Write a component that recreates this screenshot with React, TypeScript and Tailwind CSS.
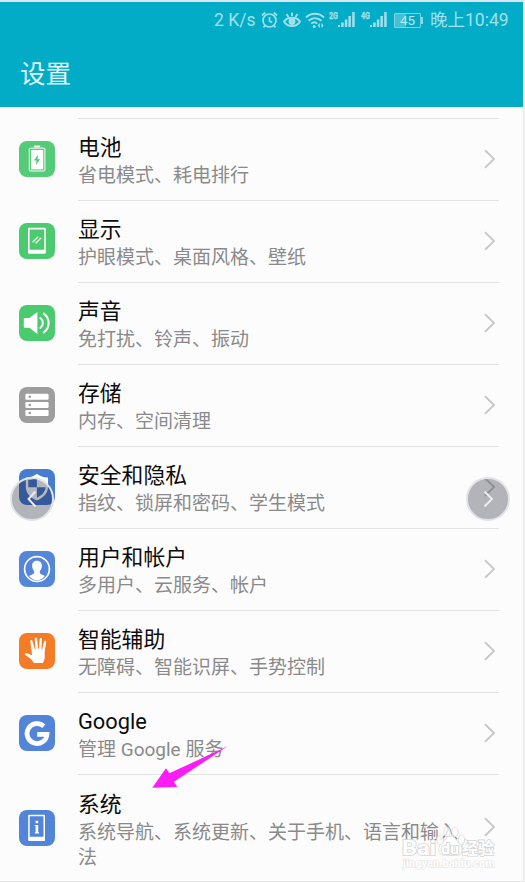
import type { ReactNode } from "react";

type Row = { title: string; sub: string; color: string; icon: ReactNode };

const rows: Row[] = [
  {
    title: "电池",
    sub: "省电模式、耗电排行",
    color: "bg-[#54cb77]",
    icon: (
      <>
        <rect x="15" y="4.6" width="6.2" height="1.8" fill="#fff" />
        <rect x="10.3" y="7.2" width="15.6" height="22.8" rx="1" fill="none" stroke="#fff" strokeWidth="1" />
        <rect x="12" y="9" width="12.2" height="19.4" fill="#fff" />
        <path d="M19.2 13.8 14.8 19.6h2.7l-.7 4.6 4.4-5.9h-2.7z" fill="#54cb77" />
      </>
    ),
  },
  {
    title: "显示",
    sub: "护眼模式、桌面风格、壁纸",
    color: "bg-[#4cca70]",
    icon: (
      <>
        <path fillRule="evenodd" d="M10 4.8h15.8q1 0 1 1v24q0 1-1 1H10q-1 0-1-1v-24q0-1 1-1zM10.6 6.4v20.4h14.6V6.4z" fill="#fff" />
        <path d="M13.7 19.2l5.5-5.5M16.6 20.4l5.5-5.5" stroke="#fff" strokeWidth="1.3" />
      </>
    ),
  },
  {
    title: "声音",
    sub: "免打扰、铃声、振动",
    color: "bg-[#4cca70]",
    icon: (
      <>
        <path d="M5.6 13h4.8L18.4 7v22l-8-6.2H5.6q-.8 0-.8-.8v-8.200q0-.8.8-.8z" fill="#fff" />
        <path d="M21.300 13a6.200 6.200 0 0 1 0 10M24.800 8.600a11.600 11.600 0 0 1 0 18.800" fill="none" stroke="#fff" strokeWidth="2" strokeLinecap="round" />
      </>
    ),
  },
  {
    title: "存储",
    sub: "内存、空间清理",
    color: "bg-[#9d9d9d]",
    icon: (
      <>
        {[6.7, 15, 23].map((y) => (
          <g key={y}>
            <rect x="6.4" y={y} width="23.200" height="6" rx="1.200" fill="#fff" />
            <circle cx="10.800" cy={y + 3} r="1.300" fill="#9d9d9d" />
          </g>
        ))}
      </>
    ),
  },
  {
    title: "安全和隐私",
    sub: "指纹、锁屏和密码、学生模式",
    color: "bg-[#487cd1]",
    icon: (
      <>
        <path d="M17.900 4.700C20.500 7 24.500 8.300 29 8.500v9.500c0 6.500-5 11-11.100 13.500C11.700 29 6.800 24.500 6.800 18V8.500c4.500-.2 8.500-1.500 11.100-3.800z" fill="#fff" />
        <path d="M17.900 8.500c-2.500 1.500-5 2.300-8.600 2.600v7.100h8.600zM17.900 18.200h8.700c-.3 4.800-4 8.300-8.700 10.500z" fill="#487cd1" />
      </>
    ),
  },
  {
    title: "用户和帐户",
    sub: "多用户、云服务、帐户",
    color: "bg-[#5486da]",
    icon: (
      <>
        <circle cx="18" cy="18" r="12.400" fill="none" stroke="#fff" strokeWidth="1.700" />
        <path d="M18 9.800c3.500 0 5 2.300 4.900 5.300-.1 2.200-1 3.700-2 4.800v2.300c1.200 1.400 3.300 1.600 5 2.700-2 2.500-4.700 4.300-7.900 4.300s-5.900-1.800-7.900-4.300c1.700-1.100 3.800-1.300 5-2.700v-2.300c-1-1.100-1.900-2.600-2-4.800-.1-3 1.400-5.300 4.900-5.300z" fill="#fff" />
      </>
    ),
  },
  {
    title: "智能辅助",
    sub: "无障碍、智能识屏、手势控制",
    color: "bg-[#f57c27]",
    icon: (
      <path
        d="M11.300 8.700c-.3-1.700 1.700-2.200 2.200-.7l2.300 8.200.7-.1L15.700 6c-.1-1.700 2.200-1.800 2.400-.2l1.100 10h.7l.8-9.600c.2-1.600 2.300-1.400 2.200.2l-.5 10 .7.2 2-8c.4-1.500 2.400-1 2.100.6l-1.500 9.300c-.2 3.200.5 5.700-.4 8.200-.7 2-1 2.700-1.600 3.300H14.800c-1-1.600-1.900-3.400-4.200-5-1.800-1.300-3.400-2.100-4.600-3.400-.7-.9.200-1.700 1.300-1.400 2.200.3 3.900 1.300 5.800 2.100z"
        fill="#fff"
      />
    ),
  },
  {
    title: "Google",
    sub: "管理 Google 服务",
    color: "bg-[#5284d9]",
    icon: (
      <path d="M24.800 11.200A10 10 0 1 0 28 19.300H18.200" fill="none" stroke="#fff" strokeWidth="4.700" />
    ),
  },
  {
    title: "系统",
    sub: "系统导航、系统更新、关于手机、语言和输入法",
    color: "bg-[#5284d9]",
    icon: (
      <>
        <path fillRule="evenodd" d="M10 4.800h15.200q.8 0 .8.800v24.600q0 .8-.8.800H10q-.8 0-.8-.800V5.600q0-.8.800-.8zM10.700 6.300v20.500h13.800V6.300z" fill="#fff" />
        <path d="M16.600 10.800h2.600v2.500h-2.600zM15.800 15h3.400v7.300h.8v1.100h-4.200v-1.100h.8v-6.200h-.8z" fill="#fff" />
      </>
    ),
  },
];

function Signal({ label }: { label: string }) {
  return (
    <svg className="h-5 w-7" viewBox="0 0 28 20" fill="currentColor">
      <text x="0" y="8.500" fontSize="9" fontWeight="700" stroke="currentColor" strokeWidth=".3" textLength="9" lengthAdjust="spacingAndGlyphs">
        {label}
      </text>
      <path d="M9 15h2v2H9zM12.200 12.500h2.500V17h-2.500zM15.800 9.500h2.500V17h-2.500zM19.400 6h2.500v11h-2.500zM23.200 2h2.500v15h-2.500z" />
    </svg>
  );
}

function StatusBar() {
  return (
    <div className="relative h-[37px] text-[#a0e0ea]">
      <div className="flex h-full items-center pl-[214px] text-[17.500px]">
        <span className="w-[47px] whitespace-nowrap">2 K/s</span>
        <svg className="-mt-[2px] h-[18px] w-[17px]" viewBox="0 0 17 18" fill="none" stroke="currentColor" strokeWidth="1.700">
          <circle cx="8.500" cy="9.500" r="6.500" />
          <path d="M8.500 6v4l2.700 1.500M1 4.500l3.300-3M16 4.500l-3.300-3M4 14.500l-1.500 2M13 14.500l1.500 2" />
        </svg>
        <svg className="-mt-[2px] ml-[5px] h-[18px] w-[18px]" viewBox="0 0 18 18" fill="none" stroke="currentColor" strokeWidth="1.900">
          <path d="M1 10.500c3.500-5 12.500-5 16 0-3.500 6-12.500 6-16 0zM9 1.500V5M3.500 3l2 3M14.500 3l-2 3" />
          <circle cx="9" cy="10.500" r="3.400" fill="currentColor" stroke="none" />
        </svg>
        <svg className="-mt-[2px] ml-[4px] h-[18px] w-[20px]" viewBox="0 0 20 18" fill="none" stroke="currentColor" strokeWidth="1.800">
          <path d="M1 6.500c5-5 13-5 18 0M3.500 9.800c4-3.500 9-3.500 13 0M6.300 12.700c2-1.900 4-1.900 6 0" />
          <circle cx="9.200" cy="15.600" r="1.500" fill="currentColor" stroke="none" />
          <path d="M14.500 12.500 13 14.500l1.500 2zM16.800 12.500l1.500 2-1.500 2z" fill="currentColor" strokeWidth=".6" />
        </svg>
        <span className="-mt-[2px] ml-[4px]"><Signal label="2G" /></span>
        <span className="-mt-[2px] ml-[4px]"><Signal label="4G" /></span>
        <span className="-mt-px ml-[5px] flex h-[15px] w-[27px] items-center justify-center rounded-[1px] border border-[#7fd3e1] bg-linear-to-r from-[#45bfd3] from-45% to-transparent to-45% text-[13.500px] text-[#b8e9f0]">
          45
        </span>
        <span className="h-[7px] w-[2px] bg-[#8fd9e5]" />
        <span className="ml-[7px] whitespace-nowrap">晚上10:49</span>
      </div>
    </div>
  );
}

function Chevron() {
  return (
    <svg className="h-5 w-3 shrink-0" viewBox="0 0 12 20" fill="none" stroke="#c8c8c8" strokeWidth="1.900">
      <path d="M1 1.300 10 10l-9 8.700" />
    </svg>
  );
}

function Watermark() {
  return (
    <svg className="absolute left-[398px] top-[820px] h-[52px] w-[104px]" viewBox="0 0 104 52">
      <g fill="#fff" fillOpacity=".75" stroke="#dedede" strokeWidth=".9">
        <ellipse cx="42" cy="18" rx="3.200" ry="4.500" />
        <ellipse cx="49" cy="10" rx="3.200" ry="4.500" />
        <ellipse cx="57" cy="10" rx="3.200" ry="4.500" />
        <ellipse cx="63.500" cy="18" rx="3.200" ry="4.500" />
        <path d="M52.500 14c5 0 6 5 9 8 5 4 3 12-4 11.500h-10c-7 .5-9-7.500-4-11.500 3-3 4-8 9-8z" />
      </g>
      <g fill="#fff" stroke="#d6d6d6" strokeWidth="1.600" paintOrder="stroke" fontWeight="700">
        <text x="4" y="33" fontSize="21" textLength="34" lengthAdjust="spacingAndGlyphs">Bai</text>
        <text x="43" y="31.500" fontSize="14" textLength="18" lengthAdjust="spacingAndGlyphs">du</text>
        <text x="64" y="32" fontSize="16" textLength="32" lengthAdjust="spacingAndGlyphs">经验</text>
        <text x="5" y="45" fontSize="10.500" strokeWidth="1" stroke="#e2e2e2" textLength="92" lengthAdjust="spacingAndGlyphs">jingyan.baidu.com</text>
      </g>
    </svg>
  );
}

function NavCircle({ side }: { side: "left" | "right" }) {
  const left = side === "left";
  return (
    <div
      className={`absolute top-[475px] flex size-11 items-center justify-center rounded-full border-2 border-[#e2e3e7] bg-[#080c20]/30 ${
        left ? "left-[10px]" : "left-[466px]"
      }`}
    >
      <svg className="h-[18px] w-[10px]" viewBox="0 0 10 18" fill="none" stroke="#eceef1" strokeWidth="1.900">
        <path d={left ? "M8.500 1.500 1.500 9l7 7.500" : "M1.500 1.500 9 9l-7.500 7.500"} />
      </svg>
    </div>
  );
}

export default function App() {
  return (
    <div className="relative h-[882px] w-[525px] overflow-hidden border-r-2 border-b border-t-2 border-r-[#eeeeee] border-b-[#e5e5e5] border-t-[#dce6ea] bg-[#fcfcfc] font-['Roboto','Noto_Sans_CJK_SC',sans-serif]">
      <header className="h-[105px] bg-[#02acc7]">
        <StatusBar />
        <h1 className="pl-5 pt-[16px] text-[25.500px] leading-[38px] text-[#e0f6f9]">设置</h1>
      </header>
      <main className="pt-[11px]">
        {rows.map((r, i) => {
          const last = i === rows.length - 1;
          return (
            <section key={r.title} className={`flex items-center pl-[19px] ${last ? "h-[107px]" : "h-[82px]"}`}>
              <div className={`size-9 shrink-0 rounded-[8px] ${r.color}`}>
                <svg className="size-9" viewBox="0 0 36 36">{r.icon}</svg>
              </div>
              <div className="ml-[23px] flex h-full w-[421px] items-center border-t border-[#e3e3e3]">
                <div className={`w-[382px] ${last ? "pt-[4px]" : "pt-[3px]"}`}>
                  <h2 className="text-[21.800px] leading-[28px] text-[#0c0c0c]">{r.title}</h2>
                  <p className="pt-px text-[19px] leading-[25px] text-[#8a8a8a]">{r.sub}</p>
                </div>
                <div className="-mt-[2px] ml-[24px] flex"><Chevron /></div>
              </div>
            </section>
          );
        })}
      </main>
      <NavCircle side="left" />
      <NavCircle side="right" />
      <Watermark />
      <svg className="absolute left-[150px] top-[742px] h-[48px] w-[80px]" viewBox="150 744 80 48">
        <path d="M152.300 787.700 166 768.300l3.300 5 58.400-27-53.700 35.400 3.300 5.300z" fill="#fb1df5" />
      </svg>
    </div>
  );
}
